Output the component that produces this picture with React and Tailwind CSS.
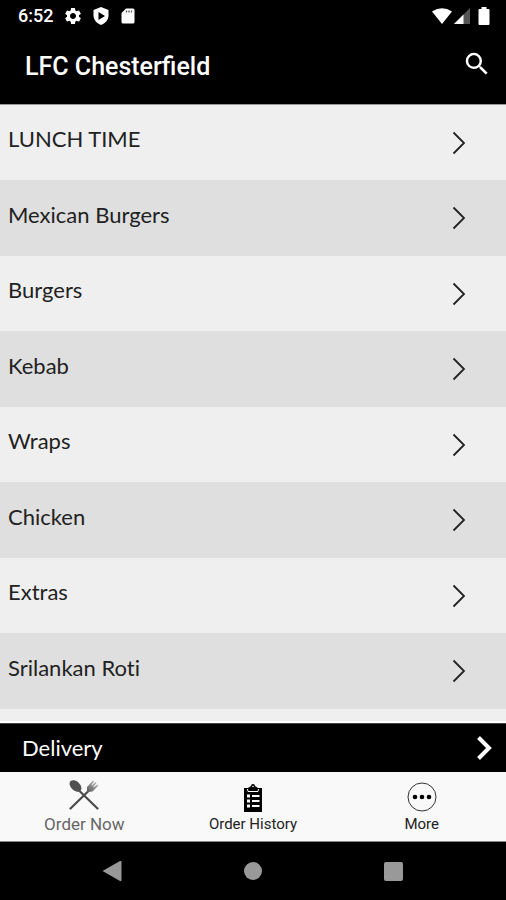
import { MdSearch, MdSettings } from "react-icons/md";

const categories = [
  "LUNCH TIME",
  "Mexican Burgers",
  "Burgers",
  "Kebab",
  "Wraps",
  "Chicken",
  "Extras",
  "Srilankan Roti",
];

function Chevron({ className, strokeWidth }) {
  return (
    <svg viewBox="0 0 14 24" fill="none" stroke="currentColor" strokeWidth={strokeWidth} className={className} aria-hidden="true">
      <path d="M1.500 1.500 12 12 1.500 22.500" />
    </svg>
  );
}

function StatusBar() {
  return (
    <div className="flex h-8 items-center justify-between pr-4 pl-[18px]">
      <div className="flex items-center gap-2.5">
        <span className="text-lg font-medium">6:52</span>
        <MdSettings className="size-5" />
        <svg viewBox="0 0 16 18" className="h-[18px] w-4" aria-hidden="true">
          <path d="M8 0 15.500 3V8.500C15.500 13 12 16.500 8 18 4 16.500.5 13 .5 8.500V3Z" fill="#fff" />
          <path d="M5.500 5v8L12 9Z" fill="#000" />
        </svg>
        <svg viewBox="0 0 14 16" className="ml-0.5 h-4 w-3.5" aria-hidden="true">
          <path d="M5 .5H12Q13.500.5 13.500 2V14Q13.500 15.500 12 15.500H2Q.5 15.500.5 14V5Z" fill="#fff" />
          <path d="M5.500 2.500v2M8 2.500v2M10.500 2.500v2" stroke="#555" strokeWidth="1.300" />
        </svg>
      </div>
      <div className="flex items-center">
        <svg viewBox="0 0 20 16" className="h-4 w-5" aria-hidden="true">
          <path d="M0 3.500Q10-3 20 3.500L10 16Z" fill="#fff" />
        </svg>
        <svg viewBox="0 0 16 16" className="ml-0.5 size-4" aria-hidden="true">
          <path d="M16 0V16H0Z" fill="#555" />
          <path d="M9.500 6.500V16H0Z" fill="#fff" />
        </svg>
        <svg viewBox="0 0 12 18" className="ml-2 h-[18px] w-3" aria-hidden="true">
          <path d="M3.500 0h5v2H10.500Q11.500 2 11.500 3V17Q11.500 18 10.500 18H1.500Q.5 18 .5 17V3Q.5 2 1.500 2H3.500Z" fill="#fff" />
        </svg>
      </div>
    </div>
  );
}

function CutleryIcon() {
  return (
    <svg viewBox="0 0 30 30" className="size-[30px]" aria-hidden="true">
      <defs>
        <linearGradient id="fork" x1="0" x2="1" y1="1" y2="0">
          <stop offset="0" stopColor="#555" />
          <stop offset="1" stopColor="#ccc" />
        </linearGradient>
      </defs>
      <path d="M10 10.500 28.500 28.500M1.500 28.500 20 10.500" stroke="#4a4a4a" strokeWidth="2.200" strokeLinecap="round" />
      <ellipse cx="6.500" cy="6" rx="6.800" ry="4.600" transform="rotate(43 6.500 6)" fill="#505050" />
      <path d="M18 12V7L24 .5 25 1.500 22.500 5 23 5.500 26.500 2 27.500 3 24.500 6.500 25 7 28.500 4.500 29.500 5.500 23.500 11.500Z" fill="url(#fork)" />
    </svg>
  );
}

function ClipboardIcon() {
  return (
    <svg viewBox="0 0 18 28" className="h-7 w-[18px]" aria-hidden="true">
      <path d="M0 4H4L7 2Q7 0 9 0T11 2L14 4H18V28H0Z" fill="#000" />
      <path d="M3.500 5 4 7.500H14L14.500 5" fill="none" stroke="#fff" />
      <circle cx="9" cy="2.500" r="0.800" fill="#fff" />
      <path d="M3 12h3M3 17h3M3 22h3" stroke="#fff" strokeWidth="3" />
      <path d="M8 12h7.500M8 17h7.500M8 22h7.500" stroke="#fff" strokeWidth="2" />
    </svg>
  );
}

function MoreIcon() {
  return (
    <svg viewBox="0 0 30 30" className="size-[30px]" aria-hidden="true">
      <circle cx="15" cy="15" r="14" fill="none" stroke="#333" />
      <circle cx="8" cy="15" r="2.300" />
      <circle cx="15" cy="15" r="2.300" />
      <circle cx="22" cy="15" r="2.300" />
    </svg>
  );
}

export default function App() {
  return (
    <div className="flex h-screen flex-col overflow-hidden bg-black font-[Roboto,sans-serif] text-white">
      <StatusBar />
      <header className="flex h-[72px] shrink-0 items-center justify-between pr-3.5 pl-[25px]">
        <h1 className="pb-0.5 text-[25px] leading-8 font-medium">LFC Chesterfield</h1>
        <button type="button" aria-label="Search" className="mb-2">
          <MdSearch className="size-[30px]" />
        </button>
      </header>

      <main className="min-h-0 flex-1 overflow-hidden border-t border-b-2 border-t-[#999] border-b-white bg-[#efefef] font-[Lato,sans-serif] text-[#222]">
        <ul>
          {categories.map((name) => (
            <li key={name} className="h-[75px] even:h-[76px] even:bg-[#dfdfdf]">
              <button type="button" className="flex size-full items-center justify-between pr-10 pl-2 text-left">
                <span className="pb-[7px] text-[22px] leading-7 [font-variant-ligatures:none]">{name}</span>
                <Chevron className="h-6 w-3.5" strokeWidth="1.800" />
              </button>
            </li>
          ))}
        </ul>
      </main>

      <button type="button" className="flex h-[49px] shrink-0 items-center justify-between border-t border-[#444] pr-3.5 pl-[22px] font-[Lato,sans-serif] text-[22px]">
        <span className="pb-0.5">Delivery</span>
        <Chevron className="h-6 w-4" strokeWidth="4" />
      </button>

      <nav className="grid h-[70px] shrink-0 grid-cols-3 border-b border-[#888] bg-[#f9f9f9] text-[15px] leading-5 text-[#222]">
        <button type="button" className="flex flex-col items-center gap-0.5 pt-2 text-[17px] leading-6 text-[#666]">
          <CutleryIcon />
          Order Now
        </button>
        <button type="button" className="flex flex-col items-center gap-0.5 pt-3">
          <ClipboardIcon />
          Order History
        </button>
        <button type="button" className="flex flex-col items-center gap-0.5 pt-2.5">
          <MoreIcon />
          More
        </button>
      </nav>

      <div className="flex h-[58px] shrink-0 items-center justify-between pr-[103px] pl-[102px] text-[#999]">
        <button type="button" aria-label="Back">
          <svg viewBox="0 0 20 22" className="h-[22px] w-5" fill="currentColor" aria-hidden="true">
            <path d="M.5 11 18 1Q19.500.5 19.500 2V20Q19.500 21.500 18 21Z" />
          </svg>
        </button>
        <button type="button" aria-label="Home" className="size-[18px] rounded-full bg-[#999]" />
        <button type="button" aria-label="Recent apps" className="size-[19px] rounded-xs bg-[#999]" />
      </div>
    </div>
  );
}
